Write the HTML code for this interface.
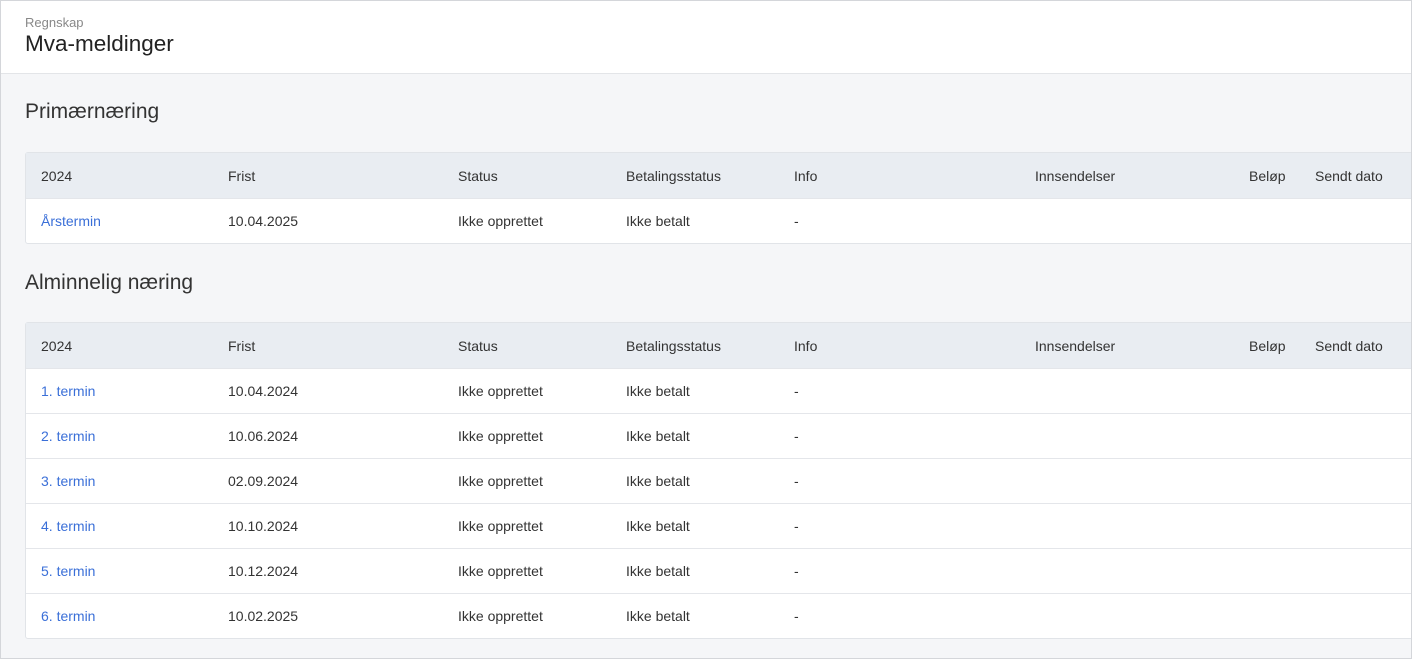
<!DOCTYPE html>
<html><head><style>
*{margin:0;padding:0;box-sizing:border-box}
body{width:1412px;height:659px;overflow:hidden;background:#f5f6f8;font-family:"Liberation Sans",sans-serif;color:#333;position:relative}
.frame{position:absolute;left:0;top:0;width:1412px;height:659px;border:1px solid #d4d6da;pointer-events:none}
.hdr{position:absolute;left:0;top:0;width:1412px;height:74px;background:#fff;border-bottom:1px solid #e3e5e8}
.sub{position:absolute;left:25px;top:15px;font-size:13px;color:#888}
.ttl{position:absolute;left:25px;top:31px;font-size:22.5px;color:#222}
h2{position:absolute;left:25px;font-size:21px;font-weight:normal;color:#333}
.tbl{position:absolute;left:25px;width:1395px;background:#fff;border:1px solid #e1e4e8;border-radius:3px}
.row{position:relative;height:45px;border-top:1px solid #e4e6ea;font-size:14px}
.row.h{background:#e9edf2;height:45px;border-top:none}
.row span{position:absolute;top:50%;transform:translateY(-50%)}
.a{color:#3a6fd8}
</style></head><body>
<div class="hdr"><div class="sub">Regnskap</div><div class="ttl">Mva-meldinger</div></div>
<h2 style="top:100px">Primærnæring</h2>
<div class="tbl" style="top:152px">
<div class="row h"><span style="left:15px">2024</span><span style="left:202px">Frist</span><span style="left:432px">Status</span><span style="left:600px">Betalingsstatus</span><span style="left:768px">Info</span><span style="left:1009px">Innsendelser</span><span style="left:1223px">Beløp</span><span style="left:1289px">Sendt dato</span></div>
<div class="row"><span class="a" style="left:15px">Årstermin</span><span style="left:202px">10.04.2025</span><span style="left:432px">Ikke opprettet</span><span style="left:600px">Ikke betalt</span><span style="left:768px">-</span></div>
</div>
<h2 style="top:271px">Alminnelig næring</h2>
<div class="tbl" style="top:322px">
<div class="row h"><span style="left:15px">2024</span><span style="left:202px">Frist</span><span style="left:432px">Status</span><span style="left:600px">Betalingsstatus</span><span style="left:768px">Info</span><span style="left:1009px">Innsendelser</span><span style="left:1223px">Beløp</span><span style="left:1289px">Sendt dato</span></div>
<div class="row"><span class="a" style="left:15px">1. termin</span><span style="left:202px">10.04.2024</span><span style="left:432px">Ikke opprettet</span><span style="left:600px">Ikke betalt</span><span style="left:768px">-</span></div>
<div class="row"><span class="a" style="left:15px">2. termin</span><span style="left:202px">10.06.2024</span><span style="left:432px">Ikke opprettet</span><span style="left:600px">Ikke betalt</span><span style="left:768px">-</span></div>
<div class="row"><span class="a" style="left:15px">3. termin</span><span style="left:202px">02.09.2024</span><span style="left:432px">Ikke opprettet</span><span style="left:600px">Ikke betalt</span><span style="left:768px">-</span></div>
<div class="row"><span class="a" style="left:15px">4. termin</span><span style="left:202px">10.10.2024</span><span style="left:432px">Ikke opprettet</span><span style="left:600px">Ikke betalt</span><span style="left:768px">-</span></div>
<div class="row"><span class="a" style="left:15px">5. termin</span><span style="left:202px">10.12.2024</span><span style="left:432px">Ikke opprettet</span><span style="left:600px">Ikke betalt</span><span style="left:768px">-</span></div>
<div class="row"><span class="a" style="left:15px">6. termin</span><span style="left:202px">10.02.2025</span><span style="left:432px">Ikke opprettet</span><span style="left:600px">Ikke betalt</span><span style="left:768px">-</span></div>
</div>
<div class="frame"></div>
</body></html>
